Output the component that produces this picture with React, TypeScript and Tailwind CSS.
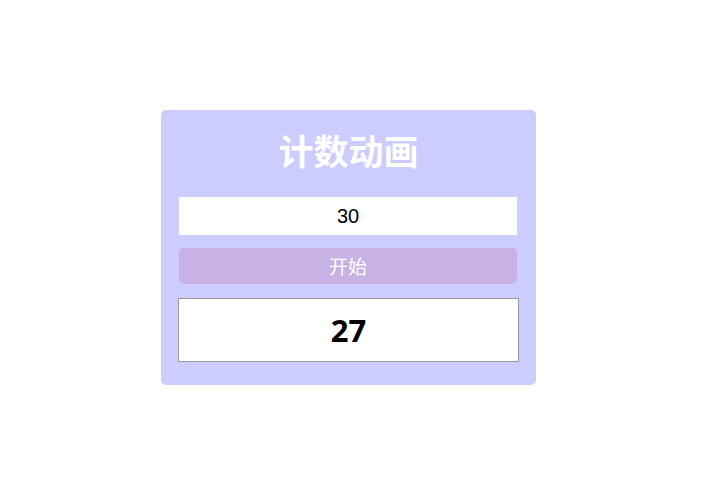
import React, { useState } from "react";

export default function App() {
  const [value, setValue] = useState("30");
  return (
    <div className="min-h-[501px] w-[710px] bg-white pl-[161px] pt-[110px]">
      <div className="flex w-[375px] flex-col rounded-[5px] bg-[#ccccff] px-[18px] pb-[23px] pt-[19px]">
        <h1 className="text-center font-['Noto_Sans_CJK_SC','Noto_Sans',sans-serif] text-[35px] font-bold leading-[42px] text-white">
          计数动画
        </h1>
        <input
          value={value}
          onChange={(e) => setValue(e.target.value)}
          className="mt-[26px] h-[38px] w-[338px] border-0 bg-white text-center font-['Liberation_Sans',Arial,sans-serif] text-[20px] text-black outline-none"
        />
        <button className="mt-[13px] h-[36px] w-[338px] rounded-[5px] bg-[#c8b1e3] font-['Noto_Sans_CJK_SC','Noto_Sans',sans-serif] text-[19px] text-white">
          开始
        </button>
        <div className="-mx-px mt-[14px] flex h-[64px] items-center justify-center border border-[#9a9a9a] bg-white font-['Open_Sans','Noto_Sans',sans-serif] text-[31px] font-bold text-black">
          27
        </div>
      </div>
    </div>
  );
}
